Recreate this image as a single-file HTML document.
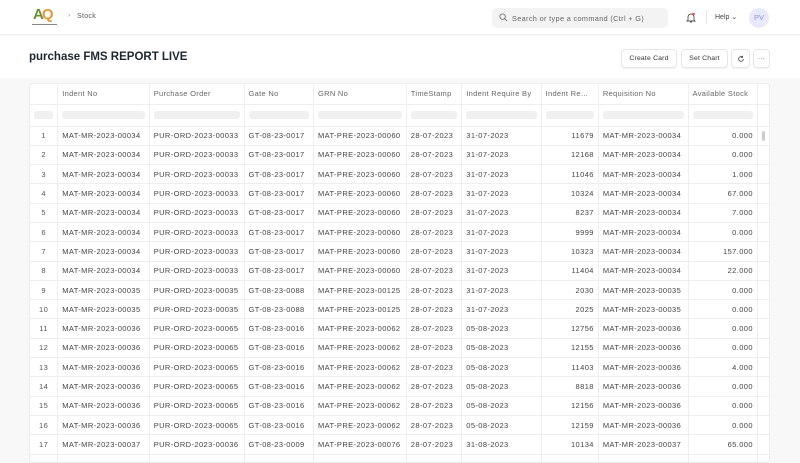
<!DOCTYPE html>
<html><head><meta charset="utf-8">
<style>
*{box-sizing:border-box;margin:0;padding:0}
body{width:800px;height:460px;overflow:hidden;background:#f8f8f8;font-family:"Liberation Sans",sans-serif;color:#333;position:relative}
.nav{position:absolute;left:0;top:0;width:800px;height:35px;background:#fff;border-bottom:1px solid #eee}
.head{position:absolute;left:0;top:36px;width:800px;height:42px;background:#fff}
.title{position:absolute;left:29px;top:51px;font-size:11.5px;font-weight:bold;color:#1f272e}
.btn{position:absolute;top:49px;height:19px;border:1px solid #e6e6e6;border-radius:4px;background:#fff;font-size:6.8px;letter-spacing:.2px;color:#333;display:flex;align-items:center;justify-content:center;box-shadow:0 1px 1px rgba(0,0,0,.05)}
.card{position:absolute;left:29px;top:83px;width:741px;height:380px;background:#fff;border:1px solid #ececec;border-radius:4px;overflow:hidden}
table{border-collapse:collapse;table-layout:fixed;font-size:7.5px;letter-spacing:.4px;color:#444}
td{border-right:1px solid #eee;border-bottom:1px solid #eee;height:19.3px;padding:0 4px;white-space:nowrap;overflow:hidden}
tr.h td{height:20px;color:#666;letter-spacing:.3px}
tr.f td{height:22px}
.pill{height:8px;background:#f0f0f0;border-radius:3px}
td.n{text-align:center;color:#555}
td.r{text-align:right}
</style></head><body>
<div class="nav">
  <div style="position:absolute;left:33px;top:6px;font-size:15px;font-weight:bold;letter-spacing:-2px"><span style="color:#6b8e3a">A</span><span style="color:#e8963a">Q</span></div>
  <div style="position:absolute;left:32px;top:24px;width:25px;height:1px;background:#888"></div>
  <div style="position:absolute;left:68px;top:12px;font-size:6.5px;color:#888">›</div>
  <div style="position:absolute;left:77px;top:13px;font-size:7px;color:#555;letter-spacing:.3px">Stock</div>
  <div style="position:absolute;left:492px;top:8px;width:176px;height:20px;background:#f3f3f3;border-radius:5px;font-size:7.3px;letter-spacing:.35px;color:#666;padding:6px 0 0 20px">Search or type a command (Ctrl + G)</div>
  <svg style="position:absolute;left:499px;top:13px" width="9" height="9" viewBox="0 0 10 10"><circle cx="4" cy="4" r="3" fill="none" stroke="#777" stroke-width="1"/><path d="M6.3 6.3L9 9" stroke="#777"/></svg>
  <svg style="position:absolute;left:686px;top:12px" width="10" height="11" viewBox="0 0 10 11"><path d="M2 8V5a3 3 0 016 0v3l1 1H1z" fill="none" stroke="#555" stroke-width=".9"/><path d="M4 10h2" stroke="#555"/><circle cx="7.5" cy="2" r="1.3" fill="#e24c4c"/></svg>
  <div style="position:absolute;left:706px;top:10px;width:1px;height:14px;background:#e6e6e6"></div>
  <div style="position:absolute;left:715px;top:13px;font-size:7px;color:#444">Help ⌄</div>
  <div style="position:absolute;left:749px;top:8px;width:20px;height:20px;border-radius:50%;background:#e8eafb;color:#8a93e6;font-size:7.5px;text-align:center;line-height:20px">PV</div>
</div>
<div class="head"></div>
<div class="title">purchase FMS REPORT LIVE</div>
<div class="btn" style="left:621px;width:56px">Create Card</div>
<div class="btn" style="left:681px;width:47px">Set Chart</div>
<div class="btn" style="left:731px;width:19px"><svg width="8" height="8" viewBox="0 0 10 10"><path d="M8 5a3 3 0 11-1-2.3M7 1v2h-2" fill="none" stroke="#444" stroke-width="1"/></svg></div>
<div class="btn" style="left:753px;width:17px">···</div>
<div class="card">
<table>
<colgroup><col style="width:29px"><col style="width:92px"><col style="width:95px"><col style="width:70px"><col style="width:93px"><col style="width:56px"><col style="width:80px"><col style="width:58px"><col style="width:90px"><col style="width:70px"><col style="width:8px"></colgroup>
<tr class="h"><td></td><td>Indent No</td><td>Purchase Order</td><td>Gate No</td><td>GRN No</td><td>TimeStamp</td><td>Indent Require By</td><td>Indent Re...</td><td>Requisition No</td><td>Available Stock</td><td style="border-right:0"></td></tr>
<tr class="f"><td><div class="pill"></div></td><td><div class="pill"></div></td><td><div class="pill"></div></td><td><div class="pill"></div></td><td><div class="pill"></div></td><td><div class="pill"></div></td><td><div class="pill"></div></td><td><div class="pill"></div></td><td><div class="pill"></div></td><td><div class="pill"></div></td><td style="border-right:0"></td></tr>
<tr><td class="n">1</td><td>MAT-MR-2023-00034</td><td>PUR-ORD-2023-00033</td><td>GT-08-23-0017</td><td>MAT-PRE-2023-00060</td><td>28-07-2023</td><td>31-07-2023</td><td class="r">11679</td><td>MAT-MR-2023-00034</td><td class="r">0.000</td><td style="border-right:0;background:#fff"><div style="width:3px;height:10px;background:#ccc;border-radius:2px;margin-left:0"></div></td></tr>
<tr><td class="n">2</td><td>MAT-MR-2023-00034</td><td>PUR-ORD-2023-00033</td><td>GT-08-23-0017</td><td>MAT-PRE-2023-00060</td><td>28-07-2023</td><td>31-07-2023</td><td class="r">12168</td><td>MAT-MR-2023-00034</td><td class="r">0.000</td><td style="border-right:0"></td></tr>
<tr><td class="n">3</td><td>MAT-MR-2023-00034</td><td>PUR-ORD-2023-00033</td><td>GT-08-23-0017</td><td>MAT-PRE-2023-00060</td><td>28-07-2023</td><td>31-07-2023</td><td class="r">11046</td><td>MAT-MR-2023-00034</td><td class="r">1.000</td><td style="border-right:0"></td></tr>
<tr><td class="n">4</td><td>MAT-MR-2023-00034</td><td>PUR-ORD-2023-00033</td><td>GT-08-23-0017</td><td>MAT-PRE-2023-00060</td><td>28-07-2023</td><td>31-07-2023</td><td class="r">10324</td><td>MAT-MR-2023-00034</td><td class="r">67.000</td><td style="border-right:0"></td></tr>
<tr><td class="n">5</td><td>MAT-MR-2023-00034</td><td>PUR-ORD-2023-00033</td><td>GT-08-23-0017</td><td>MAT-PRE-2023-00060</td><td>28-07-2023</td><td>31-07-2023</td><td class="r">8237</td><td>MAT-MR-2023-00034</td><td class="r">7.000</td><td style="border-right:0"></td></tr>
<tr><td class="n">6</td><td>MAT-MR-2023-00034</td><td>PUR-ORD-2023-00033</td><td>GT-08-23-0017</td><td>MAT-PRE-2023-00060</td><td>28-07-2023</td><td>31-07-2023</td><td class="r">9999</td><td>MAT-MR-2023-00034</td><td class="r">0.000</td><td style="border-right:0"></td></tr>
<tr><td class="n">7</td><td>MAT-MR-2023-00034</td><td>PUR-ORD-2023-00033</td><td>GT-08-23-0017</td><td>MAT-PRE-2023-00060</td><td>28-07-2023</td><td>31-07-2023</td><td class="r">10323</td><td>MAT-MR-2023-00034</td><td class="r">157.000</td><td style="border-right:0"></td></tr>
<tr><td class="n">8</td><td>MAT-MR-2023-00034</td><td>PUR-ORD-2023-00033</td><td>GT-08-23-0017</td><td>MAT-PRE-2023-00060</td><td>28-07-2023</td><td>31-07-2023</td><td class="r">11404</td><td>MAT-MR-2023-00034</td><td class="r">22.000</td><td style="border-right:0"></td></tr>
<tr><td class="n">9</td><td>MAT-MR-2023-00035</td><td>PUR-ORD-2023-00035</td><td>GT-08-23-0088</td><td>MAT-PRE-2023-00125</td><td>28-07-2023</td><td>31-07-2023</td><td class="r">2030</td><td>MAT-MR-2023-00035</td><td class="r">0.000</td><td style="border-right:0"></td></tr>
<tr><td class="n">10</td><td>MAT-MR-2023-00035</td><td>PUR-ORD-2023-00035</td><td>GT-08-23-0088</td><td>MAT-PRE-2023-00125</td><td>28-07-2023</td><td>31-07-2023</td><td class="r">2025</td><td>MAT-MR-2023-00035</td><td class="r">0.000</td><td style="border-right:0"></td></tr>
<tr><td class="n">11</td><td>MAT-MR-2023-00036</td><td>PUR-ORD-2023-00065</td><td>GT-08-23-0016</td><td>MAT-PRE-2023-00062</td><td>28-07-2023</td><td>05-08-2023</td><td class="r">12756</td><td>MAT-MR-2023-00036</td><td class="r">0.000</td><td style="border-right:0"></td></tr>
<tr><td class="n">12</td><td>MAT-MR-2023-00036</td><td>PUR-ORD-2023-00065</td><td>GT-08-23-0016</td><td>MAT-PRE-2023-00062</td><td>28-07-2023</td><td>05-08-2023</td><td class="r">12155</td><td>MAT-MR-2023-00036</td><td class="r">0.000</td><td style="border-right:0"></td></tr>
<tr><td class="n">13</td><td>MAT-MR-2023-00036</td><td>PUR-ORD-2023-00065</td><td>GT-08-23-0016</td><td>MAT-PRE-2023-00062</td><td>28-07-2023</td><td>05-08-2023</td><td class="r">11403</td><td>MAT-MR-2023-00036</td><td class="r">4.000</td><td style="border-right:0"></td></tr>
<tr><td class="n">14</td><td>MAT-MR-2023-00036</td><td>PUR-ORD-2023-00065</td><td>GT-08-23-0016</td><td>MAT-PRE-2023-00062</td><td>28-07-2023</td><td>05-08-2023</td><td class="r">8818</td><td>MAT-MR-2023-00036</td><td class="r">0.000</td><td style="border-right:0"></td></tr>
<tr><td class="n">15</td><td>MAT-MR-2023-00036</td><td>PUR-ORD-2023-00065</td><td>GT-08-23-0016</td><td>MAT-PRE-2023-00062</td><td>28-07-2023</td><td>05-08-2023</td><td class="r">12156</td><td>MAT-MR-2023-00036</td><td class="r">0.000</td><td style="border-right:0"></td></tr>
<tr><td class="n">16</td><td>MAT-MR-2023-00036</td><td>PUR-ORD-2023-00065</td><td>GT-08-23-0016</td><td>MAT-PRE-2023-00062</td><td>28-07-2023</td><td>05-08-2023</td><td class="r">12159</td><td>MAT-MR-2023-00036</td><td class="r">0.000</td><td style="border-right:0"></td></tr>
<tr><td class="n">17</td><td>MAT-MR-2023-00037</td><td>PUR-ORD-2023-00036</td><td>GT-08-23-0009</td><td>MAT-PRE-2023-00076</td><td>28-07-2023</td><td>31-08-2023</td><td class="r">10134</td><td>MAT-MR-2023-00037</td><td class="r">65.000</td><td style="border-right:0"></td></tr>
<tr><td class="n"></td><td></td><td></td><td></td><td></td><td></td><td></td><td></td><td></td><td></td><td style="border-right:0"></td></tr>
</table>
</div>
</body></html>
